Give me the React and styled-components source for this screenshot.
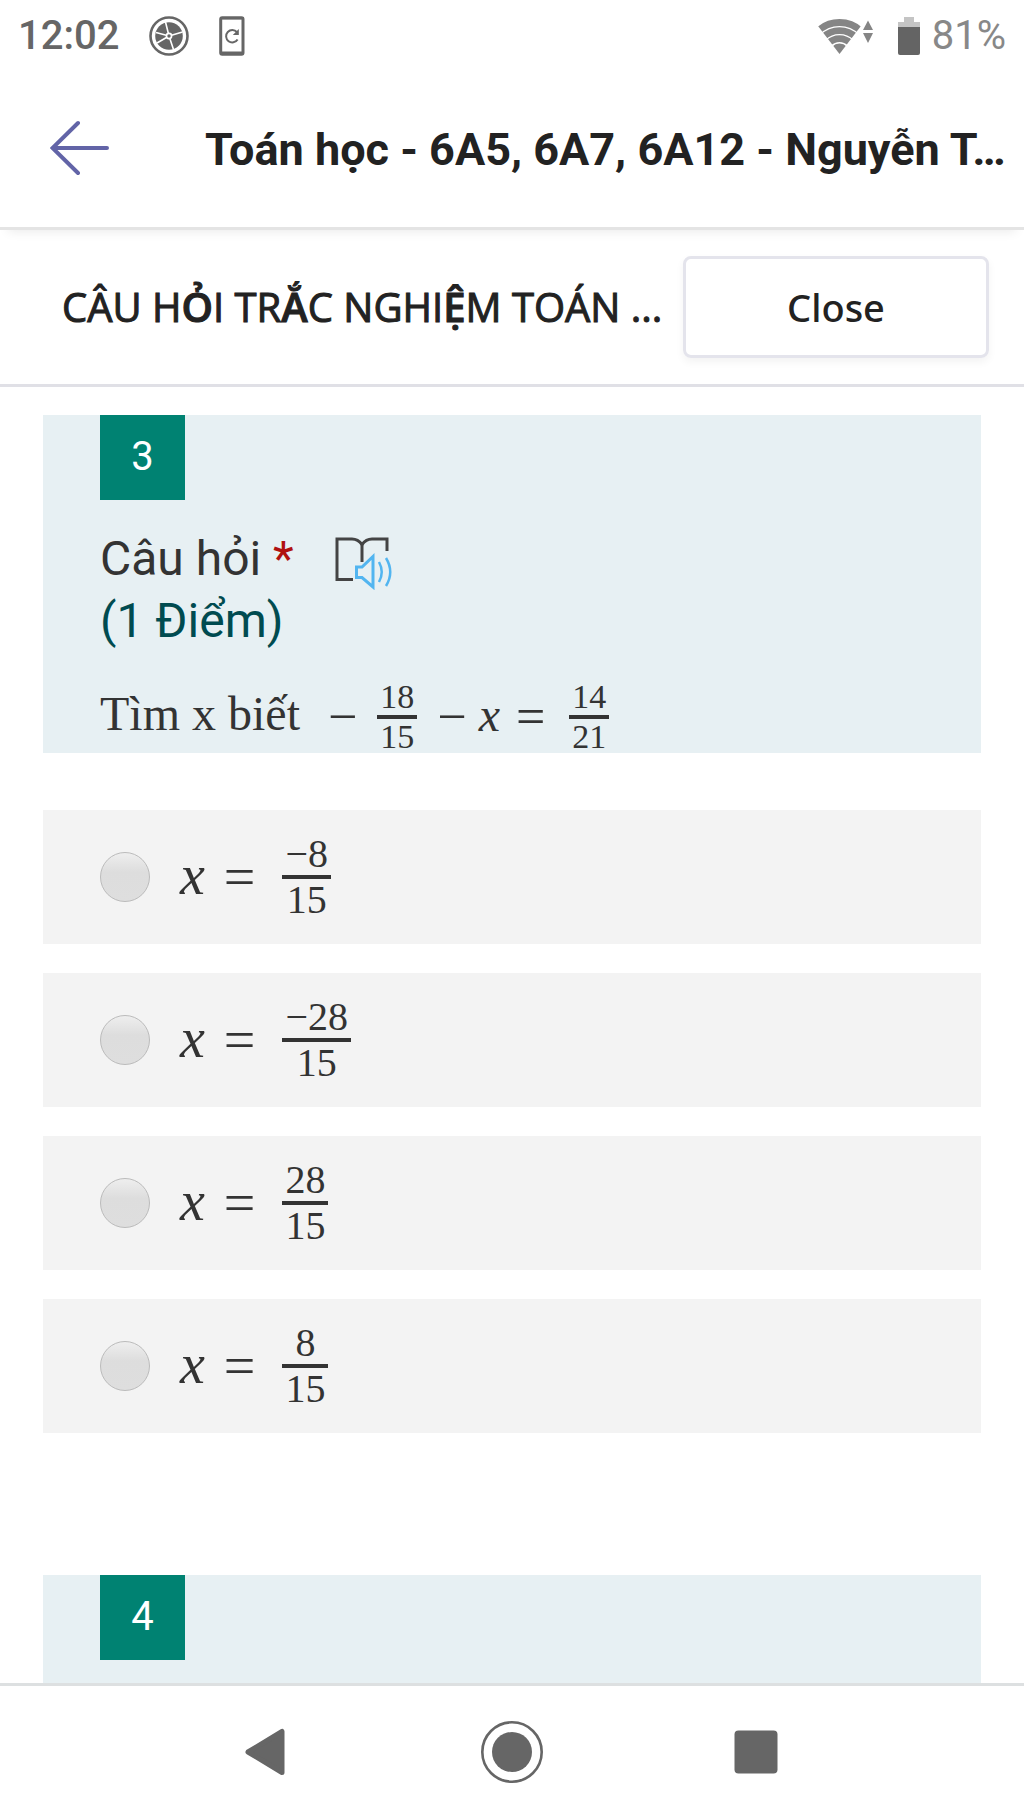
import React from 'react'
import styled, { createGlobalStyle } from 'styled-components'

const ANSWERS = [
  { id: 'a', top: '−8', bottom: '15' },
  { id: 'b', top: '−28', bottom: '15' },
  { id: 'c', top: '28', bottom: '15' },
  { id: 'd', top: '8', bottom: '15' },
]

function Fraction({ top, bottom, small }) {
  return (
    <FractionBox $small={small}>
      <Numerator>{top}</Numerator>
      <Denominator>{bottom}</Denominator>
    </FractionBox>
  )
}

function StatusBar() {
  return (
    <StatusRow>
      <StatusGroup>
        <Clock>12:02</Clock>
        <WheelIcon />
        <SyncIcon />
      </StatusGroup>
      <StatusGroup $end>
        <WifiIcon />
        <BatteryIcon />
        <Percent>81%</Percent>
      </StatusGroup>
    </StatusRow>
  )
}

function WheelIcon() {
  return (
    <svg width="40" height="40" viewBox="0 0 40 40" aria-hidden="true">
      <circle cx="20" cy="20" r="18.5" fill="none" stroke="#666" strokeWidth="2.6" />
      <circle cx="20" cy="20" r="13.8" fill="#666" />
      <g stroke="#fff" strokeWidth="1.6">
        <path d="M20 20 16.5 6M20 20 33.5 16M20 20 24.5 33.5M20 20 8 27M20 20 7 16.5" />
      </g>
      <circle cx="20" cy="20" r="3.4" fill="#fff" />
      <circle cx="20" cy="20" r="1.7" fill="#666" />
    </svg>
  )
}

function SyncIcon() {
  return (
    <svg width="26" height="40" viewBox="0 0 26 40" aria-hidden="true">
      <rect x="1.7" y="1.7" width="22.3" height="36.6" rx="1.5" fill="none" stroke="#666" strokeWidth="3" />
      <path d="M1 35.5h24v3H1zM1 1h24v2.5H1z" fill="#666" />
      <path d="M18 16.2A6.2 6.2 0 1 0 18.6 23.5" fill="none" stroke="#666" strokeWidth="2" />
      <path d="M19.8 13v6h-6z" fill="#666" />
    </svg>
  )
}

function WifiIcon() {
  return (
    <svg width="58" height="40" viewBox="0 0 58 40" aria-hidden="true">
      <clipPath id="wifi-fan">
        <path d="M-1.5 8 21.5 38 44.5 8V-4H-1.5z" />
      </clipPath>
      <g clipPath="url(#wifi-fan)" fill="none" stroke="#858585" strokeWidth="6.8">
        <circle cx="21.5" cy="38" r="31.5" />
        <circle cx="21.5" cy="38" r="23.4" />
        <circle cx="21.5" cy="38" r="15.4" />
        <circle cx="21.5" cy="38" r="5.2" strokeWidth="10.4" />
      </g>
      <path d="M50 4.500 55 14H45zM45 17h10l-5 10z" fill="#858585" />
    </svg>
  )
}

function BatteryIcon() {
  return (
    <BatterySvg width="22" height="40" viewBox="0 0 22 40" aria-hidden="true">
      <path d="M6 1h10v5h6v6H0V6h6z" fill="#c4c4c4" />
      <path d="M0 11h22v26a2 2 0 0 1-2 2H2a2 2 0 0 1-2-2z" fill="#646464" />
    </BatterySvg>
  )
}

function ReaderIcon() {
  return (
    <svg width="58" height="54" viewBox="0 0 58 54" aria-hidden="true">
      <g fill="none" stroke="#444" strokeWidth="3">
        <path d="M18 43.500H2V3H17Q23 3 27 8.500Q31 3 37 3H52V15" />
        <path d="M27 7.500V26" />
      </g>
      <g fill="none" stroke="#52b5f0" strokeWidth="3">
        <path d="M21.500 31H27L38 20.500V51L27 41.500H21.500Z" />
        <path d="M44 26Q49.500 36 44 46" strokeWidth="2.500" />
        <path d="M51 22Q59.500 36 51 50" strokeWidth="2.500" />
      </g>
    </svg>
  )
}

function App() {
  return (
    <>
      <GlobalStyle />
      <Screen>
        <StatusBar />
        <AppBar>
          <BackButton type="button" aria-label="Back">
            <svg width="60" height="56" viewBox="0 0 60 56" fill="none" stroke="#6264a7" strokeWidth="4" strokeLinecap="round" aria-hidden="true">
              <path d="M28 3 2.500 28 28 53M2.500 28H57" />
            </svg>
          </BackButton>
          <AppTitle>Toán học - 6A5, 6A7, 6A12 - Nguyễn T…</AppTitle>
        </AppBar>
        <FormBar>
          <FormTitle>
            CÂU H<b>Ỏ</b>I TR<b>Ắ</b>C NGHI<b>Ệ</b>M TOÁN ...
          </FormTitle>
          <CloseButton type="button">Close</CloseButton>
        </FormBar>

        <Content>
          <Question>
            <Badge>3</Badge>
            <QuestionTitle>
              Câu hỏi <Required>*</Required>
              <ReaderButton type="button" aria-label="Immersive Reader">
                <ReaderIcon />
              </ReaderButton>
            </QuestionTitle>
            <Points>(1 Điểm)</Points>
            <Equation id="equation">
              <Words>Tìm x biết</Words>
              <Operator $before={28} $after={20}>−</Operator>
              <Fraction small top="18" bottom="15" />
              <Operator $before={20} $after={12}>−</Operator>
              <Variable>x</Variable>
              <Operator $before={16} $after={24}>=</Operator>
              <Fraction small top="14" bottom="21" />
            </Equation>
          </Question>

          <Answers role="radiogroup" aria-labelledby="equation">
            {ANSWERS.map((answer) => (
              <Answer key={answer.id} htmlFor={answer.id}>
                <Radio type="radio" name="question-3" id={answer.id} />
                <AnswerMath>
                  <Variable>x</Variable>
                  <Equals>=</Equals>
                  <Fraction top={answer.top} bottom={answer.bottom} />
                </AnswerMath>
              </Answer>
            ))}
          </Answers>

          <Question $grow>
            <Badge>4</Badge>
          </Question>
        </Content>

        <NavBar>
          <NavButton type="button" aria-label="Back">
            <svg width="64" height="64" viewBox="0 0 64 64" aria-hidden="true">
              <path d="M12 32 46 11.500V52.500Z" fill="#666" stroke="#666" strokeWidth="5" strokeLinejoin="round" />
            </svg>
          </NavButton>
          <NavButton type="button" aria-label="Home">
            <svg width="64" height="64" viewBox="0 0 64 64" aria-hidden="true">
              <circle cx="32" cy="32" r="29.700" fill="none" stroke="#666" strokeWidth="2.600" />
              <circle cx="32" cy="32" r="20" fill="#666" />
            </svg>
          </NavButton>
          <NavButton type="button" aria-label="Recents">
            <svg width="64" height="64" viewBox="0 0 64 64" aria-hidden="true">
              <rect x="10.500" y="10.500" width="43" height="43" rx="4" fill="#666" />
            </svg>
          </NavButton>
        </NavBar>
      </Screen>
    </>
  )
}

const GlobalStyle = createGlobalStyle`
  * {
    box-sizing: border-box;
  }

  body {
    margin: 0;
    background-color: #fff;
    color: #222;
    font-family: Roboto, sans-serif;
  }

  button {
    border: 0;
    padding: 0;
    background: none;
    color: inherit;
  }

  svg {
    display: block;
    flex-shrink: 0;
  }
`

const Screen = styled.div`
  display: flex;
  flex-direction: column;
  min-height: 100vh;
`

const StatusRow = styled.div`
  display: flex;
  justify-content: space-between;
  align-items: center;
  height: 72px;
  padding: 0 18px;
  font-size: 40px;
  line-height: 48px;
`

const StatusGroup = styled.div`
  display: flex;
  align-items: center;
  gap: ${(props) => (props.$end ? '12px' : '30px')};
`

const Clock = styled.span`
  color: #666;
  font-weight: 500;
`

const Percent = styled.span`
  color: #888;
`

const BatterySvg = styled.svg`
  margin-left: 10px;
`

const AppBar = styled.header`
  display: flex;
  align-items: center;
  gap: 95px;
  height: 158px;
  padding: 0 12px 4px 50px;
  border-bottom: 3px solid #e4e4e4;
  box-shadow: 0 10px 10px -8px rgba(0, 0, 0, 0.08);
`

const BackButton = styled.button`
  flex-shrink: 0;
`

const AppTitle = styled.h1`
  flex: 1;
  min-width: 0;
  margin: 0;
  padding-top: 4px;
  overflow: hidden;
  font-size: 45px;
  font-weight: 700;
  line-height: 60px;
  white-space: nowrap;
`

const FormBar = styled.div`
  display: flex;
  align-items: center;
  justify-content: space-between;
  height: 157px;
  padding: 0 35px 0 62px;
  border-bottom: 3px solid #e0e0e6;
`

/* Open Sans has no medium weight, the thin stroke fills in for it */
const FormTitle = styled.h2`
  margin: 0;
  font-family: 'Open Sans', sans-serif;
  font-size: 40px;
  font-weight: 400;
  line-height: 56px;
  white-space: nowrap;
  -webkit-text-stroke: 1px currentColor;

  b {
    font-weight: 600;
  }
`

const CloseButton = styled.button`
  flex-shrink: 0;
  width: 306px;
  height: 102px;
  border: 3px solid #e4e4ec;
  border-radius: 8px;
  box-shadow: 0 4px 8px rgba(0, 0, 0, 0.05);
  font-family: 'Noto Sans', sans-serif;
  font-size: 38px;
  font-weight: 500;
`

const Content = styled.main`
  display: flex;
  flex: 1;
  flex-direction: column;
  padding: 28px 43px 0;
`

const Question = styled.section`
  flex: ${(props) => (props.$grow ? '1 0 108px' : 'none')};
  padding: 0 57px;
  background-color: #e7f0f3;
  color: #333;
`

const Badge = styled.div`
  width: 85px;
  height: 85px;
  background-color: #008272;
  color: #fff;
  font-size: 40px;
  line-height: 84px;
  text-align: center;
`

const QuestionTitle = styled.h3`
  display: flex;
  align-items: center;
  margin: 28px 0 0;
  font-size: 48px;
  font-weight: 400;
  line-height: 62px;
  white-space: pre;
`

const Required = styled.span`
  color: #b01010;
`

const ReaderButton = styled.button`
  margin: 8px 0 0 41px;
`

const Points = styled.div`
  color: #004b50;
  font-size: 48px;
  line-height: 62px;
`

const Equation = styled.div`
  display: flex;
  align-items: center;
  height: 72px;
  margin-top: 29px;
  font-family: 'Liberation Serif', serif;
  font-size: 48px;
  line-height: 56px;
`

const Words = styled.span`
  margin-bottom: 6px;
`

const Operator = styled.span`
  margin: 0 ${(props) => props.$after}px 0 ${(props) => props.$before}px;
  font-size: 52px;
`

const Variable = styled.i`
  margin-bottom: 4px;
  font-style: italic;
`

const FractionBox = styled.span`
  display: inline-flex;
  flex-direction: column;
  font-size: ${(props) => (props.$small ? '34px' : '40px')};
  line-height: ${(props) => (props.$small ? '36px' : '42px')};
  text-align: center;
`

const Numerator = styled.span`
  padding: 0 3px;
  border-bottom: 4px solid #333;
`

const Denominator = styled.span`
  padding: 0 3px;
`

const Answers = styled.div`
  display: grid;
  gap: 29px;
  margin: 57px 0 142px;
`

const Answer = styled.label`
  display: flex;
  align-items: center;
  gap: 30px;
  height: 134px;
  padding: 0 57px;
  background-color: #f3f3f3;
  color: #333;
`

const Radio = styled.input`
  appearance: none;
  width: 50px;
  height: 50px;
  margin: 0;
  border: 1px solid #bbb;
  border-radius: 50%;
  background: linear-gradient(#eee 0%, #ddd 40%, #dedede 100%);

  &:checked {
    border: 14px solid #008272;
  }
`

const AnswerMath = styled.span`
  display: flex;
  align-items: center;
  font-family: 'Liberation Serif', serif;
  font-size: 56px;
  line-height: 60px;
`

const Equals = styled.span`
  margin: 0 27px 0 19px;
`

const NavBar = styled.nav`
  display: flex;
  align-items: center;
  justify-content: center;
  gap: 180px;
  height: 137px;
  padding-bottom: 2px;
  border-top: 3px solid #dde0e1;
`

const NavButton = styled.button`
  width: 64px;
  height: 64px;
`

export default App
